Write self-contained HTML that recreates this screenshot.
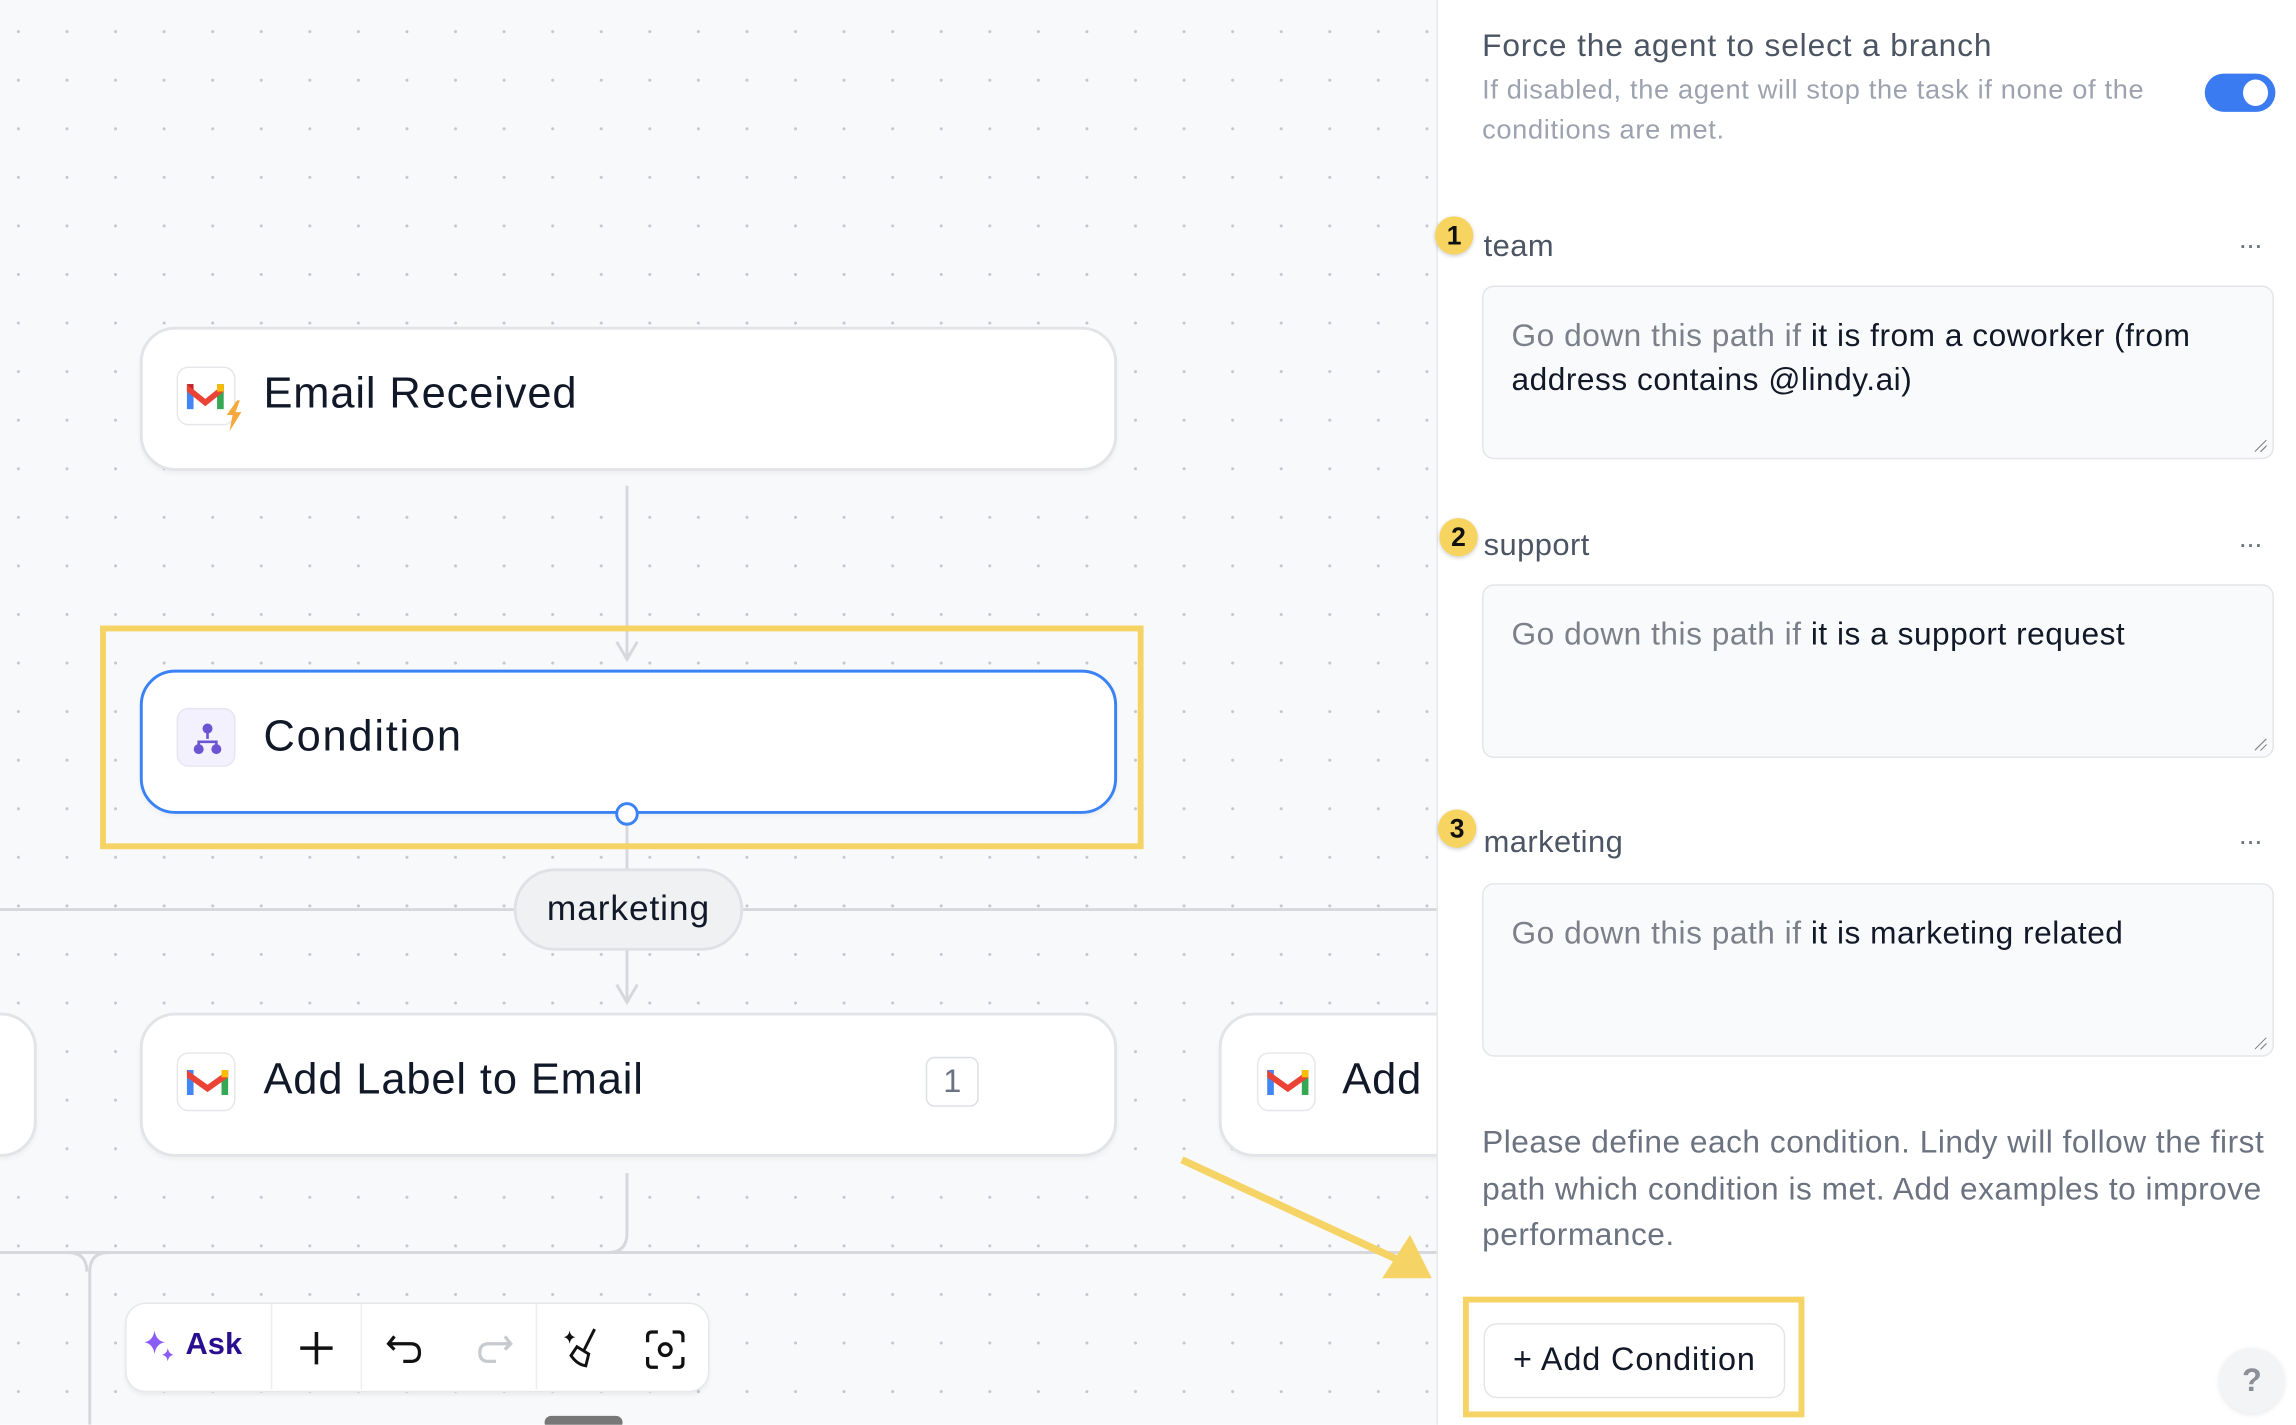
<!DOCTYPE html>
<html><head><meta charset="utf-8"><style>
*{box-sizing:border-box;margin:0;padding:0}
html,body{width:2296px;height:1424px;overflow:hidden;background:#fff;font-family:"Liberation Sans",sans-serif}
#w{position:absolute;left:0;top:0;width:1560px;height:968px;transform:scale(1.4718);transform-origin:0 0}
svg{overflow:visible}
.canvas{position:absolute;left:0;top:0;width:976px;height:968px;background-color:#f8f9fb;background-image:radial-gradient(circle,#c4c8ce 0.9px,transparent 1.2px);background-size:33px 33px;background-position:-4px 5px;overflow:hidden}
.card{position:absolute;background:#fff;border:2px solid #e2e4e8;border-radius:24px;box-shadow:0 2px 3px rgba(0,0,0,.04)}
.ic{position:absolute;width:40px;height:40px;border:1px solid #e5e7eb;border-radius:8px;background:#fff}
.t{position:absolute;font-size:29.5px;color:#111827;letter-spacing:.6px}
.abs{position:absolute}
.panel{position:absolute;left:976px;top:0;width:584px;height:968px;background:#fff;border-left:1px solid #e5e7eb}
.badge{position:absolute;width:26px;height:26px;border-radius:50%;background:#f7d35f;font-size:18px;font-weight:bold;text-align:center;line-height:26px;color:#111;box-shadow:0 1px 3px rgba(0,0,0,.2)}
.lbl{position:absolute;font-size:21px;color:#4b5563;letter-spacing:.3px}
.dots{position:absolute;left:1522px;font-size:13px;color:#6b7280;letter-spacing:1px;font-weight:bold}
.ta{position:absolute;left:1007px;width:538px;height:118px;background:#f9fafb;border:1px solid #e3e5e8;border-radius:8px;padding:18px 19px;font-size:21.5px;line-height:30px;color:#111827;letter-spacing:.35px}
.ta span{color:#7b818b}
.ta:after{content:"";position:absolute;right:4px;bottom:4px;width:8px;height:8px;background:linear-gradient(135deg,transparent 45%,#888 46%,#888 52%,transparent 53%,transparent 70%,#888 71%,#888 77%,transparent 78%)}
</style></head><body><div id="w">
<div class="canvas">
<svg class="abs" style="left:0;top:0" width="976" height="968">
<g stroke="#d6d8dc" stroke-width="2" fill="none">
<line x1="426" y1="330" x2="426" y2="448"/><path d="M419 436 L426 448 L433 436"/>
<line x1="426" y1="560" x2="426" y2="592"/>
<line x1="0" y1="618" x2="976" y2="618"/>
<line x1="426" y1="645" x2="426" y2="681"/><path d="M419 669 L426 681 L433 669"/>
<path d="M426 797 V838 Q426 851 413 851 H0"/>
<path d="M976 851 H74 Q61 851 61 864 V968"/>
<path d="M0 851 H46 Q59 851 59 864"/>
</g>
<g fill="#f6d365" stroke="#f6d365"><line x1="803" y1="788" x2="950" y2="856" stroke-width="5"/><path d="M972 868 L940 868 L958 840 Z"/></g>
</svg>
<div class="abs" style="left:68px;top:425px;width:709px;height:152px;border:4px solid #f6d365"></div>
<div class="card" style="left:95px;top:222px;width:664px;height:98px"></div>
<div class="ic" style="left:120px;top:249px"><svg width="40" height="40" viewBox="0 0 40 40"><rect x="6" y="11" width="4.5" height="17" fill="#4285f4"/><rect x="26.5" y="11" width="4.5" height="17" fill="#34a853"/><path d="M6 11 L18.5 21 L31 11 L31 16 L18.5 26 L6 16Z" fill="#ea4335"/><path d="M26.5 11 L31 11 L31 16 L26.5 16Z" fill="#fbbc04"/><path d="M6 11 L10.5 11 L10.5 15Z" fill="#c5221f"/><path d="M40 22 L33 32 L37 32 L35 43 L43 30 L39 30 L42 22Z" fill="#f6a93b"/></svg></div>
<div class="t" style="left:179px;top:251px">Email Received</div>
<div class="card" style="left:95px;top:455px;width:664px;height:98px;border-color:#3b82f6"></div>
<div class="ic" style="left:120px;top:481px;background:#f3f1fd;border-color:#e7e5f3"><svg width="40" height="40"><circle cx="20" cy="13" r="3.4" fill="#6b55d3"/><circle cx="14" cy="27" r="3.4" fill="#6b55d3"/><circle cx="26" cy="27" r="3.4" fill="#6b55d3"/><path d="M20 13V20M14 27V22H26V27" stroke="#6b55d3" stroke-width="1.8" fill="none"/></svg></div>
<div class="t" style="left:179px;top:484px;letter-spacing:1.2px">Condition</div>
<div class="abs" style="left:418px;top:545px;width:16px;height:16px;border-radius:50%;background:#fff;border:2px solid #3b82f6"></div>
<div class="abs" style="left:349px;top:590px;width:156px;height:56px;border-radius:28px;background:#f0f1f3;border:2px solid #dfe1e5;font-size:24px;text-align:center;line-height:52px;color:#111827;letter-spacing:.6px">marketing</div>
<div class="card" style="left:-60px;top:688px;width:85px;height:98px"></div>
<div class="card" style="left:95px;top:688px;width:664px;height:98px"></div>
<div class="ic" style="left:120px;top:715px"><svg width="40" height="40"><rect x="6" y="11" width="4.5" height="17" fill="#4285f4"/><rect x="29.5" y="11" width="4.5" height="17" fill="#34a853"/><path d="M6 11 L20 21 L34 11 L34 16 L20 26 L6 16Z" fill="#ea4335"/><path d="M29.5 11 L34 11 L34 16 L29.5 16Z" fill="#fbbc04"/></svg></div>
<div class="t" style="left:179px;top:717px">Add Label to Email</div>
<div class="abs" style="left:629px;top:718px;width:36px;height:34px;border:1.5px solid #dcdfe3;border-radius:6px;text-align:center;line-height:32px;font-size:22px;color:#6b7280">1</div>
<div class="card" style="left:828px;top:688px;width:300px;height:98px"></div>
<div class="ic" style="left:854px;top:715px"><svg width="40" height="40"><rect x="6" y="11" width="4.5" height="17" fill="#4285f4"/><rect x="29.5" y="11" width="4.5" height="17" fill="#34a853"/><path d="M6 11 L20 21 L34 11 L34 16 L20 26 L6 16Z" fill="#ea4335"/><path d="M29.5 11 L34 11 L34 16 L29.5 16Z" fill="#fbbc04"/></svg></div>
<div class="t" style="left:912px;top:717px">Add</div>
<div class="abs" style="left:85px;top:885px;width:397px;height:61px;background:#fff;border:1.5px solid #e5e7eb;border-radius:14px;box-shadow:0 2px 3px rgba(0,0,0,.05)">
<div class="abs" style="left:98px;top:0;width:1px;height:58px;background:#eceef1"></div>
<div class="abs" style="left:159px;top:0;width:1px;height:58px;background:#eceef1"></div>
<div class="abs" style="left:278px;top:0;width:1px;height:58px;background:#eceef1"></div>
<svg class="abs" style="left:10px;top:16px" width="26" height="28"><path d="M9 2 Q10 9 16 10 Q10 11 9 18 Q8 11 2 10 Q8 9 9 2Z" fill="#8b5cf6"/><path d="M18 14 Q18.6 18 22 18.5 Q18.6 19 18 23 Q17.4 19 14 18.5 Q17.4 18 18 14Z" fill="#8b5cf6"/></svg>
<div class="abs" style="left:40px;top:16px;font-size:21px;color:#2a0e8f;font-weight:bold">Ask</div>
<svg class="abs" style="left:116px;top:17px" width="26" height="26"><path d="M13 2V24M2 13H24" stroke="#111" stroke-width="2.4"/></svg>
<svg class="abs" style="left:176px;top:17px" width="30" height="26"><path d="M6 5 L2 10 L6 14M2 10H17Q23 10 23 16Q23 22 17 22H12" stroke="#111" stroke-width="2.2" fill="none"/></svg>
<svg class="abs" style="left:233px;top:17px" width="30" height="26"><path d="M24 5 L28 10 L24 14M28 10H13Q7 10 7 16Q7 22 13 22H18" stroke="#c7cacf" stroke-width="2.2" fill="none"/></svg>
<svg class="abs" style="left:294px;top:14px" width="32" height="32"><path d="M24 3 L17 17M12 15 L20 20 L18 28 Q12 27 8 21 Z" stroke="#111" stroke-width="2" fill="none"/><path d="M7 4 Q7.5 8 11 8.5 Q7.5 9 7 13 Q6.5 9 3 8.5 Q6.5 8 7 4Z" fill="#111"/></svg>
<svg class="abs" style="left:351px;top:16px" width="30" height="30"><path d="M3 10V6Q3 3 6 3H10M20 3H24Q27 3 27 6V10M27 20V24Q27 27 24 27H20M10 27H6Q3 27 3 24V20" stroke="#111" stroke-width="2.2" fill="none"/><circle cx="15" cy="15" r="4" stroke="#111" stroke-width="2.2" fill="none"/></svg>
</div>
<div class="abs" style="left:370px;top:962px;width:53px;height:9px;border-radius:5px;background:#777"></div>
</div>
<div class="panel"></div>
<div class="abs" style="left:1007px;top:19px;font-size:21.5px;color:#4b5563;letter-spacing:.6px">Force the agent to select a branch</div>
<div class="abs" style="left:1007px;top:47px;width:480px;font-size:18.5px;line-height:27px;color:#9ca3af;letter-spacing:.45px">If disabled, the agent will stop the task if none of the conditions are met.</div>
<div class="abs" style="left:1498px;top:50px;width:48px;height:26px;border-radius:13px;background:#3b7bf2"><div class="abs" style="left:26px;top:4px;width:17px;height:18px;border-radius:50%;background:#fff"></div></div>
<div class="badge" style="left:975px;top:147px">1</div>
<div class="lbl" style="left:1008px;top:156px">team</div><div class="dots" style="top:160px">···</div>
<div class="ta" style="top:194px"><span>Go down this path if</span> it is from a coworker (from address contains @lindy.ai)</div>
<div class="badge" style="left:978px;top:352px">2</div>
<div class="lbl" style="left:1008px;top:359px">support</div><div class="dots" style="top:363px">···</div>
<div class="ta" style="top:397px"><span>Go down this path if</span> it is a support request</div>
<div class="badge" style="left:977px;top:550px">3</div>
<div class="lbl" style="left:1008px;top:561px">marketing</div><div class="dots" style="top:565px">···</div>
<div class="ta" style="top:600px"><span>Go down this path if</span> it is marketing related</div>
<div class="abs" style="left:1007px;top:761px;width:550px;font-size:21.5px;line-height:31.5px;color:#6b7280;letter-spacing:.35px">Please define each condition. Lindy will follow the first path which condition is met. Add examples to improve performance.</div>
<div class="abs" style="left:994px;top:881px;width:232px;height:82px;border:4px solid #f6d365"></div>
<div class="abs" style="left:1008px;top:899px;width:205px;height:51px;border:1.5px solid #e3e5e8;border-radius:9px;background:#fff;font-size:22px;text-align:center;line-height:48px;color:#111827;letter-spacing:.6px">+ Add Condition</div>
<div class="abs" style="left:1508px;top:916px;width:44px;height:44px;border-radius:50%;background:#f3f4f6;box-shadow:0 1px 4px rgba(0,0,0,.1);text-align:center;line-height:44px;font-size:22px;font-weight:bold;color:#8b9098">?</div>
</div></body></html>
